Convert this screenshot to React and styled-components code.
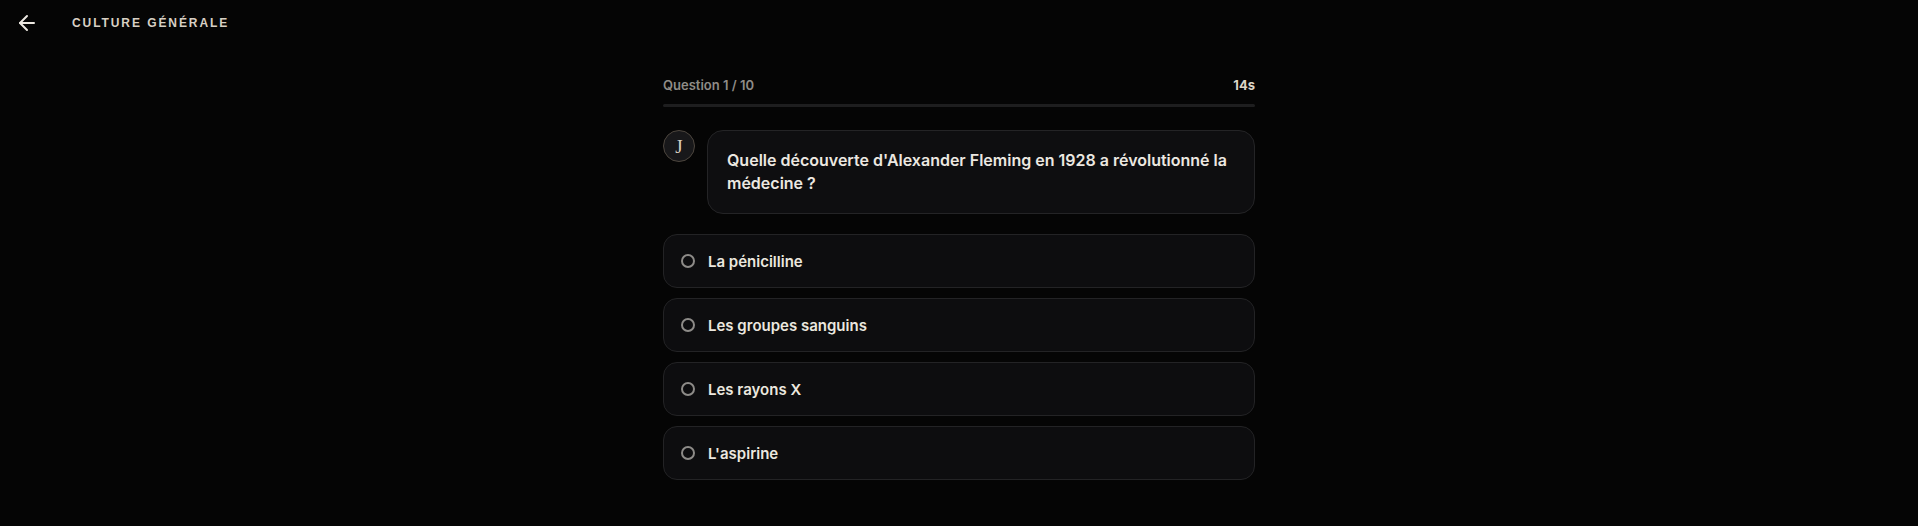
import React from "react";
import styled, { createGlobalStyle } from "styled-components";
import { ArrowLeft } from "lucide-react";

const Global = createGlobalStyle`
  html, body { margin: 0; padding: 0; background: #050505; }
  body { font-family: Inter, "Noto Sans", sans-serif; color: #ebe7df; -webkit-font-smoothing: antialiased; }
  * { box-sizing: border-box; }
`;

const Page = styled.div`
  min-height: 526px;
  background: #050505;
`;

const Header = styled.header`
  display: flex;
  align-items: center;
  height: 46px;
  padding: 0 15px;
  gap: 33px;
`;

const BackButton = styled.button`
  display: flex;
  align-items: center;
  justify-content: center;
  padding: 0;
  border: 0;
  background: transparent;
  color: #ece8e1;
  cursor: pointer;
  width: 24px;
  height: 24px;
`;

const Title = styled.h1`
  margin: 0;
  font-family: "Liberation Sans", Arial, sans-serif;
  font-size: 12px;
  font-weight: 700;
  letter-spacing: 0.16em;
  color: #d8d0c4;
  text-transform: uppercase;
`;

const Main = styled.main`
  width: 592px;
  margin: 0 auto;
  padding-top: 31px;
`;

const Progress = styled.div`
  display: flex;
  flex-direction: column;
  gap: 10px;
`;

const ProgressTop = styled.div`
  display: flex;
  justify-content: space-between;
  align-items: center;
  font-size: 13px;
  line-height: 17px;
  font-weight: 600;
`;

const Counter = styled.span`
  color: #8f8c87;
`;

const Timer = styled.span`
  color: #dcd4c7;
  font-weight: 700;
`;

const Bar = styled.div`
  height: 3px;
  border-radius: 2px;
  background: #1e1e1f;
  overflow: hidden;
`;

const ChatRow = styled.div`
  display: flex;
  align-items: flex-start;
  gap: 12px;
  margin-top: 23px;
`;

const Avatar = styled.div`
  flex: none;
  width: 32px;
  height: 32px;
  border-radius: 50%;
  border: 1px solid #4d463e;
  background: #18181a;
  display: flex;
  align-items: center;
  justify-content: center;
  font-family: "Liberation Serif", "DejaVu Serif", serif;
  font-size: 19px;
  line-height: 1;
  color: #d9d0c2;
`;

const Bubble = styled.div`
  flex: 1;
  padding: 18px 19px;
  border-radius: 16px;
  border: 1px solid #242426;
  background: #0e0e10;
  font-size: 16px;
  line-height: 23px;
  font-weight: 600;
  color: #ece8e1;
`;

const Options = styled.div`
  display: flex;
  flex-direction: column;
  gap: 10px;
  margin-top: 20px;
`;

const Option = styled.button`
  display: flex;
  align-items: center;
  gap: 13px;
  height: 54px;
  padding: 0 17px;
  border-radius: 14px;
  border: 1px solid #232325;
  background: #0d0d0f;
  color: #ebe7df;
  font-family: inherit;
  font-size: 15px;
  font-weight: 600;
  text-align: left;
  cursor: pointer;
`;

const Radio = styled.span`
  flex: none;
  width: 14px;
  height: 14px;
  border-radius: 50%;
  border: 2px solid #8d8b88;
`;

const answers = ["La pénicilline", "Les groupes sanguins", "Les rayons X", "L'aspirine"];

export default function App() {
  return (
    <Page>
      <Global />
      <Header>
        <BackButton aria-label="Retour">
          <ArrowLeft size={24} strokeWidth={2} />
        </BackButton>
        <Title>Culture générale</Title>
      </Header>
      <Main>
        <Progress>
          <ProgressTop>
            <Counter>Question 1 / 10</Counter>
            <Timer>14s</Timer>
          </ProgressTop>
          <Bar />
        </Progress>
        <ChatRow>
          <Avatar>J</Avatar>
          <Bubble>
            Quelle découverte d'Alexander Fleming en 1928 a révolutionné la médecine ?
          </Bubble>
        </ChatRow>
        <Options>
          {answers.map((a) => (
            <Option key={a}>
              <Radio />
              {a}
            </Option>
          ))}
        </Options>
      </Main>
    </Page>
  );
}
